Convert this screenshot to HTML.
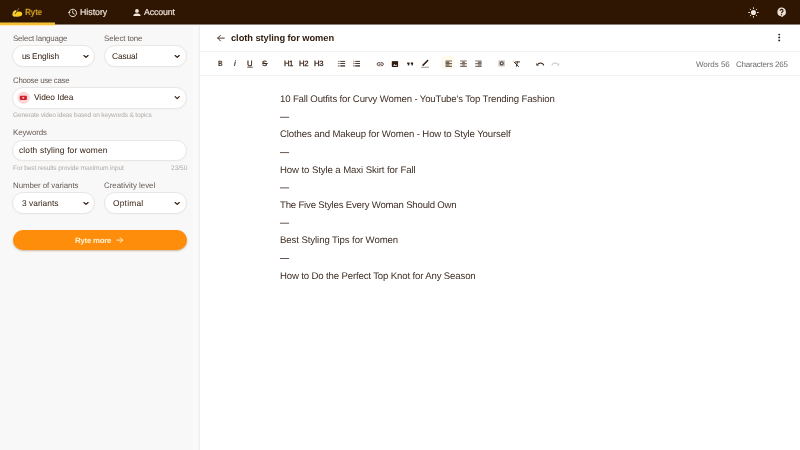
<!DOCTYPE html>
<html>
<head>
<meta charset="utf-8">
<style>
*{box-sizing:border-box;margin:0;padding:0}
html,body{width:800px;height:450px;overflow:hidden;background:#fff;font-family:"Liberation Sans",sans-serif}
.t{position:absolute;white-space:nowrap;line-height:1;will-change:transform;text-rendering:geometricPrecision;font-family:"Liberation Sans",sans-serif}
.b{position:absolute}
.sel{position:absolute;background:#fff;border:1px solid #e9e6e4;border-radius:11px;box-shadow:0 1px 1px rgba(0,0,0,.025)}
svg{position:absolute;left:0;top:0}
</style>
</head>
<body>
<div class="b" style="left:0;top:0;width:800px;height:25px;background:linear-gradient(#2f1602 0,#2f1602 23px,#261101 24px,#8f8077 24px,#8f8077 25px)"></div>
<div class="b" style="left:0;top:25px;width:200px;height:425px;background:#f8f8f8;border-right:1px solid #ededed"></div>
<div class="b" style="left:0;top:22px;width:55px;height:4px;background:linear-gradient(#93701d 0,#93701d 1px,#f7bf36 1px,#f7bf36 3px,#fdeab5 3px,#fdeab5 4px)"></div>
<div class="b" style="left:193px;top:26px;width:4px;height:424px;background:#fafafa"></div>
<div class="b" style="left:200px;top:51px;width:600px;height:1px;background:#f2f2f2"></div>
<div class="b" style="left:200px;top:75px;width:600px;height:1px;background:#f2f2f2"></div>
<div class="sel" style="left:12px;top:45px;width:83px;height:22px"></div>
<div class="sel" style="left:104px;top:45px;width:83px;height:22px"></div>
<div class="sel" style="left:12px;top:87px;width:175px;height:22px"></div>
<div class="sel" style="left:12px;top:140px;width:175px;height:21px"></div>
<div class="sel" style="left:12px;top:192px;width:83px;height:22px"></div>
<div class="sel" style="left:104px;top:192px;width:83px;height:22px"></div>
<div class="b" style="left:12.5px;top:230px;width:174.5px;height:20px;border-radius:10px;background:#fd8d0a;box-shadow:0 1px 2px rgba(120,60,0,.35)"></div>
<div class="b" style="left:441.2px;top:56.3px;width:13.7px;height:13.2px;border-radius:2.5px;background:#fffaec"></div>
<svg width="800" height="450" viewBox="0 0 800 450">
<!-- ryte icon -->
<g>
<ellipse cx="14.8" cy="13.4" rx="2.2" ry="3.3" transform="rotate(18 14.8 13.4)" fill="#f4d040"/>
<ellipse cx="18.7" cy="14" rx="3.5" ry="2.45" fill="#fbd024"/>
<ellipse cx="16.6" cy="15" rx="3" ry="1.7" fill="#fbd024"/>
<path d="M15.3 13.8 L17.3 10.6" stroke="#5a450c" stroke-width="1" stroke-linecap="round"/>
<path d="M17.2 10.8 L18.8 8.3" stroke="#8c7c6e" stroke-width=".8" stroke-linecap="round"/>
</g>
<!-- history -->
<g fill="none" stroke="#f0e3d8" stroke-width="1" stroke-linecap="round" stroke-linejoin="round">
<path d="M69.23 11.67 A3.75 3.75 0 1 1 69.50 14.82"/>
<path d="M72.75 10.9 V13.15 L74.2 14" stroke-width=".9"/>
</g>
<path d="M67.9 12.1 L70.5 12.1 L69.2 14.1Z" fill="#f0e3d8"/>
<!-- account -->
<g fill="#f3e7dc">
<circle cx="136.95" cy="10.9" r="1.9"/>
<path d="M133.4 16.1 V15.3 C133.4 14 135.6 13.5 136.95 13.5 C138.3 13.5 140.5 14 140.5 15.3 V16.1 Z"/>
</g>
<!-- sun -->
<g stroke="#e6d8ce" stroke-width="1" stroke-linecap="round">
<circle cx="753.45" cy="12.5" r="2.55" fill="#f1e6dd" stroke="none"/>
<path d="M753.45 7.7v.9M753.45 16.4v.9M748.65 12.5h.9M757.35 12.5h.9M750.15 9.2l.55.55M756.2 15.25l.55.55M756.75 9.2l-.55.55M750.7 15.25l-.55.55"/>
</g>
<!-- help -->
<g>
<path d="M781.5 7.6 a4.4 4.4 0 0 1 1.6 8.5 L782.4 17.3 L780.9 16.3 A4.4 4.4 0 0 1 781.5 7.6Z" fill="#ede1d8"/>
<path d="M780.1 10.8 a1.45 1.45 0 1 1 2.2 1.2 c-.6.4-.8.7-.8 1.3" fill="none" stroke="#2f1602" stroke-width="1.15"/>
<circle cx="781.5" cy="14.7" r=".7" fill="#2f1602"/>
</g>
<!-- kebab -->
<g fill="#33221a"><ellipse cx="779.2" cy="34.5" rx="1" ry=".85"/><ellipse cx="779.2" cy="37.45" rx="1" ry=".85"/><ellipse cx="779.2" cy="40.45" rx="1" ry=".85"/></g>
<!-- back arrow -->
<path d="M217.7 38.1 H224.3 M220.5 35.3 L217.7 38.1 L220.5 40.9" fill="none" stroke="#4a3a30" stroke-width="1" stroke-linecap="round" stroke-linejoin="round"/>
<!-- chevrons -->
<g fill="none" stroke="#2f1a0c" stroke-width="1.15" stroke-linecap="round" stroke-linejoin="round">
<path d="M83.95 55.50 L86.00 57.45 L88.05 55.50"/>
<path d="M175.15 55.50 L177.20 57.45 L179.25 55.50"/>
<path d="M175.15 96.70 L177.20 98.65 L179.25 96.70"/>
<path d="M83.95 202.50 L86.00 204.45 L88.05 202.50"/>
<path d="M175.15 202.50 L177.20 204.45 L179.25 202.50"/>
</g>
<!-- youtube -->
<circle cx="23.6" cy="97.8" r="6.1" fill="#fcd6d9"/>
<rect x="19.8" y="95.7" width="7.1" height="4.3" rx="1.1" fill="#cf1f2b"/>
<path d="M22.6 96.7 V99 L24.7 97.85Z" fill="#fff"/>
<!-- button arrow -->
<path d="M117 240.1 H122.6 M120.2 237.6 L122.7 240.1 L120.2 242.6" fill="none" stroke="#fff1d2" stroke-width=".95" stroke-linecap="round" stroke-linejoin="round"/>
<!-- underline for U, strike for S -->
<path d="M247.3 67.2 H252.7" stroke="#2f1a0c" stroke-width=".8"/>
<path d="M262.2 63.5 H267.8" stroke="#2f1a0c" stroke-width=".8"/>
<!-- bullet list -->
<g fill="#493b32">
<rect x="340.3" y="60.9" width="4.8" height="1"/><rect x="340.3" y="63" width="4.8" height="1"/><rect x="340.3" y="65.2" width="4.8" height="1.4"/>
<rect x="355.2" y="60.9" width="4.8" height="1"/><rect x="355.2" y="63" width="4.8" height="1"/><rect x="355.2" y="65.2" width="4.8" height="1.4"/>
</g>
<g fill="#8d827b">
<rect x="337.9" y="60.9" width="1.8" height="1"/><rect x="337.9" y="63" width="1.8" height="1"/><rect x="337.9" y="65.2" width="1.8" height="1.4"/>
<rect x="353.4" y="60.7" width=".9" height="1.5"/><rect x="353.1" y="62.9" width="1.5" height="1.2"/><rect x="353.1" y="65.1" width="1.5" height="1.5"/>
</g>
<!-- link -->
<g fill="none" stroke="#3d2c22" stroke-width=".8" stroke-linecap="round">
<path d="M379.5 62.6 H378.7 a1.55 1.55 0 0 0 0 3.1 H379.5"/>
<path d="M381 62.6 H381.8 a1.55 1.55 0 0 1 0 3.1 H381"/>
<path d="M379 64.15 H381.5"/>
</g>
<!-- image -->
<rect x="391.8" y="60.9" width="6.3" height="6.1" rx=".8" fill="#2f1a0c"/>
<path d="M393.1 65.85 L394.5 64.1 L395.5 65.2 L396.2 64.4 L397.2 65.85Z" fill="#fff"/>
<rect x="392.4" y="61.4" width="5.1" height=".6" fill="#6b5443"/>
<!-- quote -->
<g fill="#2f1a0c">
<path d="M407.2 62.4 h2.3 v1.9 l-.7 1.1 h-1.1 l.6-1.1 h-1.1z"/>
<path d="M410.8 62.4 h2.3 v1.9 l-.7 1.1 h-1.1 l.6-1.1 h-1.1z"/>
</g>
<!-- highlighter -->
<path d="M423.1 65.1 L427.7 60.5" stroke="#2f1a0c" stroke-width="1.5" stroke-linecap="round"/>
<path d="M421 67.3 H429" stroke="#8d837c" stroke-width=".8"/>
<!-- align left (active) -->
<g stroke="#6f6357" stroke-width="1.15">
<path d="M445.5 60.95 H452 M445.5 62.3 H449.3 M445.5 63.65 H452 M445.5 65 H449.3 M445.5 66.35 H452"/>
</g>
<!-- align center -->
<g stroke="#7d7167" stroke-width="1.15">
<path d="M460.1 60.95 H466.9 M462.1 62.3 H464.9 M460.1 63.65 H466.9 M462.1 65 H464.9 M460.1 66.35 H466.9"/>
</g>
<!-- align right -->
<g stroke="#7d7167" stroke-width="1.15">
<path d="M475.3 60.95 H481.6 M478 62.3 H481.6 M475.3 63.65 H481.6 M478 65 H481.6 M475.3 66.35 H481.6"/>
</g>
<!-- code block -->
<rect x="498.4" y="60.3" width="6.5" height="6.2" rx=".8" fill="#cbc6c2"/>
<rect x="500.3" y="62" width="2.8" height="2.8" rx=".7" fill="#f4f2f0" stroke="#2f1a0c" stroke-width=".95"/>
<!-- clear format -->
<g fill="none" stroke="#2f1a0c" stroke-width=".9" stroke-linecap="round">
<path d="M515.4 61.9 H519.6 M517.5 61.9 L516.4 66.3 M514 62 L518.7 66.6"/>
</g>
<!-- undo -->
<path d="M543.6 65 C542.9 63.3 540.8 62.3 538.4 63.7" fill="none" stroke="#2f1a0c" stroke-width="1.05" stroke-linecap="round"/>
<path d="M536.4 63 V65.5 H539Z" fill="#2f1a0c"/>
<!-- redo -->
<path d="M552 65 C552.7 63.3 554.8 62.3 557.2 63.7" fill="none" stroke="#c6c6c6" stroke-width="1.05" stroke-linecap="round"/>
<path d="M559.2 63 V65.5 H556.6Z" fill="#c6c6c6"/>
<!-- dashes -->
<g stroke="#5d4f47" stroke-width=".95">
<path d="M280 117.3 H289.1 M280 152.6 H289.1 M280 187.9 H289.1 M280 223.2 H289.1 M280 258.5 H289.1"/>
</g>
</svg>
<div class="t"  style="left:24.65px;top:8.41px;font-size:9px;font-weight:bold;color:#daa51e;letter-spacing:-0.185px;transform:scaleX(.9);transform-origin:0 50%;">Ryte</div>
<div class="t"  style="left:79.65px;top:8.41px;font-size:8.8px;color:#f3e7dc;letter-spacing:-0.026px;-webkit-text-stroke:.15px #f3e7dc;">History</div>
<div class="t"  style="left:144.05px;top:8.41px;font-size:8.8px;color:#f3e7dc;letter-spacing:-0.142px;-webkit-text-stroke:.15px #f3e7dc;">Account</div>
<div class="t"  style="left:12.55px;top:35.21px;font-size:7.9px;color:#675b54;letter-spacing:-0.154px;">Select language</div>
<div class="t"  style="left:103.75px;top:35.21px;font-size:7.9px;color:#675b54;letter-spacing:-0.100px;">Select tone</div>
<div class="t"  style="left:12.55px;top:76.91px;font-size:7.9px;color:#675b54;letter-spacing:-0.318px;">Choose use case</div>
<div class="t"  style="left:12.65px;top:129.21px;font-size:7.9px;color:#675b54;letter-spacing:-0.094px;">Keywords</div>
<div class="t"  style="left:12.65px;top:181.81px;font-size:7.9px;color:#675b54;letter-spacing:-0.070px;">Number of variants</div>
<div class="t"  style="left:103.75px;top:181.81px;font-size:7.9px;color:#675b54;letter-spacing:-0.007px;">Creativity level</div>
<div class="t"  style="left:21.65px;top:52.31px;font-size:8.4px;color:#2f1a0c;letter-spacing:-0.575px;">us</div>
<div class="t"  style="left:31.85px;top:52.31px;font-size:8.4px;color:#2f1a0c;letter-spacing:-0.067px;">English</div>
<div class="t"  style="left:112.45px;top:52.31px;font-size:8.4px;color:#2f1a0c;letter-spacing:-0.112px;">Casual</div>
<div class="t"  style="left:33.65px;top:93.41px;font-size:8.4px;color:#2f1a0c;letter-spacing:-0.060px;">Video Idea</div>
<div class="t"  style="left:19.15px;top:146.31px;font-size:8.4px;color:#2f1a0c;letter-spacing:0.146px;">cloth styling for women</div>
<div class="t"  style="left:21.55px;top:198.91px;font-size:8.4px;color:#2f1a0c;letter-spacing:0.019px;">3 variants</div>
<div class="t"  style="left:112.65px;top:198.91px;font-size:8.4px;color:#2f1a0c;letter-spacing:0.221px;">Optimal</div>
<div class="t"  style="left:12.65px;top:112.91px;font-size:6.6px;color:#b1aba6;letter-spacing:-0.172px;">Generate video ideas based on keywords &amp; topics</div>
<div class="t"  style="left:12.65px;top:165.91px;font-size:6.6px;color:#b1aba6;letter-spacing:-0.125px;">For best results provide maximum input</div>
<div class="t"  style="left:170.55px;top:165.91px;font-size:6.6px;color:#b1aba6;letter-spacing:-0.042px;">23/50</div>
<div class="t"  style="left:75.35px;top:236.91px;font-size:7.8px;font-weight:bold;color:#fff1d2;letter-spacing:-0.227px;">Ryte more</div>
<div class="t"  style="left:231.45px;top:33.50px;font-size:9.3px;font-weight:bold;color:#2f1a0c;letter-spacing:-0.058px;">cloth styling for women</div>
<div class="t"  style="left:217.65px;top:60.00px;font-size:7.7px;font-weight:bold;color:#2f1a0c;letter-spacing:-0.086px;transform:scaleX(.84);transform-origin:0 50%;">B</div>
<div class="t"  style="left:233.95px;top:60.00px;font-size:7.7px;color:#2f1a0c;letter-spacing:0.878px;font-style:italic;-webkit-text-stroke:.2px #2f1a0c;">i</div>
<div class="t"  style="left:247.15px;top:60.00px;font-size:7.7px;color:#2f1a0c;letter-spacing:-0.256px;-webkit-text-stroke:.25px #2f1a0c;">U</div>
<div class="t"  style="left:262.45px;top:60.00px;font-size:7.7px;color:#2f1a0c;letter-spacing:-0.334px;-webkit-text-stroke:.25px #2f1a0c;">S</div>
<div class="t"  style="left:283.65px;top:60.00px;font-size:7.7px;color:#2f1a0c;letter-spacing:-0.519px;-webkit-text-stroke:.25px #2f1a0c;">H1</div>
<div class="t"  style="left:298.65px;top:60.00px;font-size:7.7px;color:#2f1a0c;letter-spacing:-0.269px;-webkit-text-stroke:.25px #2f1a0c;">H2</div>
<div class="t"  style="left:313.65px;top:60.00px;font-size:7.7px;color:#2f1a0c;letter-spacing:-0.269px;-webkit-text-stroke:.25px #2f1a0c;">H3</div>
<div class="t"  style="left:695.85px;top:60.50px;font-size:8px;color:#6f6b69;letter-spacing:-0.050px;">Words 56</div>
<div class="t"  style="left:735.65px;top:60.50px;font-size:8px;color:#6f6b69;letter-spacing:-0.214px;">Characters 265</div>
<div class="t"  style="left:279.95px;top:95.00px;font-size:9.6px;color:#3f2e25;letter-spacing:-0.143px;">10 Fall Outfits for Curvy Women - YouTube's Top Trending Fashion</div>
<div class="t"  style="left:279.95px;top:130.00px;font-size:9.6px;color:#3f2e25;letter-spacing:-0.116px;">Clothes and Makeup for Women - How to Style Yourself</div>
<div class="t"  style="left:279.95px;top:166.00px;font-size:9.6px;color:#3f2e25;letter-spacing:-0.089px;">How to Style a Maxi Skirt for Fall</div>
<div class="t"  style="left:279.95px;top:201.00px;font-size:9.6px;color:#3f2e25;letter-spacing:-0.192px;">The Five Styles Every Woman Should Own</div>
<div class="t"  style="left:279.95px;top:236.00px;font-size:9.6px;color:#3f2e25;letter-spacing:-0.083px;">Best Styling Tips for Women</div>
<div class="t"  style="left:279.95px;top:272.00px;font-size:9.6px;color:#3f2e25;letter-spacing:-0.142px;">How to Do the Perfect Top Knot for Any Season</div>
</body>
</html>
